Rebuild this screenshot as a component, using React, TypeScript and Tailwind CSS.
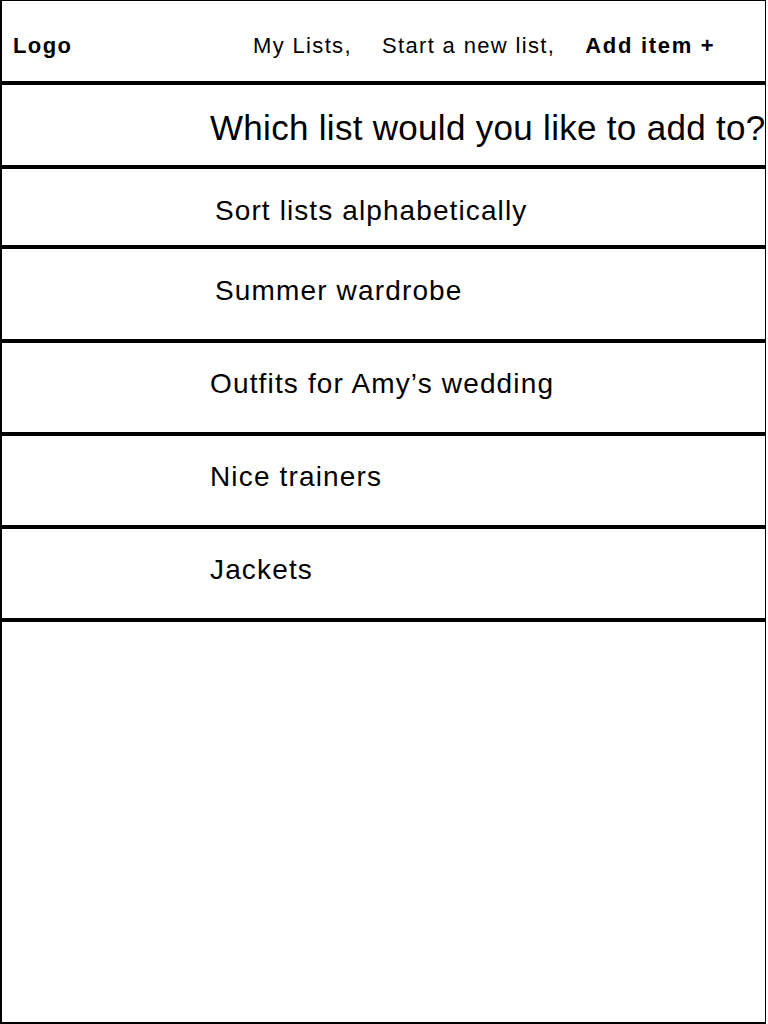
const lists = [
  { name: "Summer wardrobe", h: "h-[94px]", pl: "pl-[213px]", pt: "pt-[28px]" },
  { name: "Outfits for Amy’s wedding", h: "h-[93px]", pl: "pl-[208px]", pt: "pt-[27px]" },
  { name: "Nice trainers", h: "h-[93px]", pl: "pl-[208px]", pt: "pt-[27px]" },
  { name: "Jackets", h: "h-[93px]", pl: "pl-[208px]", pt: "pt-[27px]" },
];

export default function App() {
  return (
    <div
      className="w-[766px] h-[1024px] border-l-2 border-t border-r border-b-2 border-black bg-white text-black"
      style={{ fontFamily: '"Liberation Sans", Arial, sans-serif' }}
    >
      {/* header */}
      <header className="h-[84px] border-b-4 border-black flex items-center pl-[11px] pt-[10px]">
        <span className="w-[240px] text-[22px] leading-none font-bold tracking-[1.4px]">Logo</span>
        <nav className="flex gap-[30px] text-[22px] leading-none tracking-[1.35px]">
          <a>My Lists,</a>
          <a>Start a new list,</a>
          <a className="font-bold tracking-[1.7px]">Add item +</a>
        </nav>
      </header>

      <div className="h-[84px] border-b-4 border-black pl-[208px] pt-[25px] whitespace-nowrap">
        <h1 className="text-[35px] leading-none tracking-[0.3px]">Which list would you like to add to?</h1>
      </div>

      <div className="h-[80px] border-b-4 border-black pl-[213px] pt-[28px]">
        <button className="text-[28px] leading-none tracking-[1.1px]">Sort lists alphabetically</button>
      </div>

      <ul>
        {lists.map((l) => (
          <li key={l.name} className={`${l.h} border-b-4 border-black ${l.pl} ${l.pt}`}>
            <span className="text-[28px] leading-none tracking-[1.15px]">{l.name}</span>
          </li>
        ))}
      </ul>
    </div>
  );
}
